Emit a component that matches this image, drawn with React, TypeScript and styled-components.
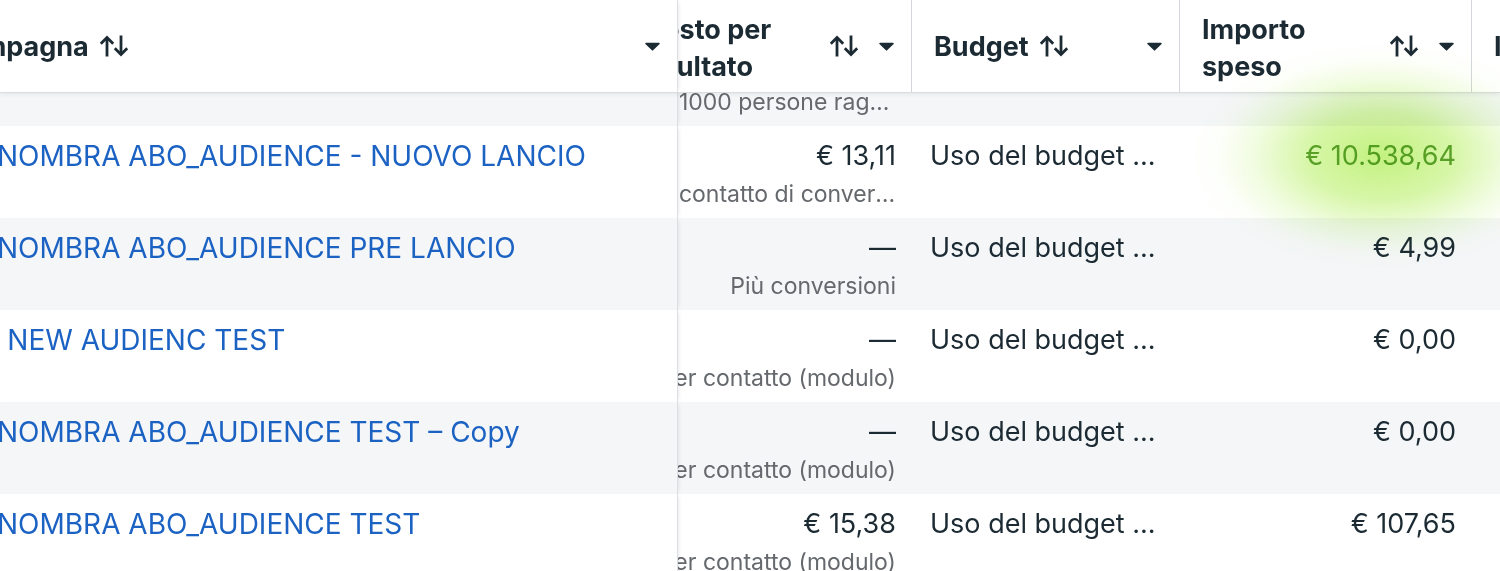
import React from 'react';
import styled, { createGlobalStyle } from 'styled-components';

const GlobalStyle = createGlobalStyle`
  html, body { margin: 0; padding: 0; background: #ffffff; }
  body { font-family: Inter, "Noto Sans", sans-serif; color: #1c2b33; -webkit-font-smoothing: antialiased; }
`;

const Viewport = styled.div`
  width: 1500px;
  height: 571px;
  overflow: hidden;
  position: relative;
  background: #ffffff;
`;

const HeaderRow = styled.div`
  display: flex;
  height: 92px;
  position: relative;
  z-index: 3;
  background: #ffffff;
  box-shadow: 0 1px 0 #d9dce0, 0 2px 5px rgba(0, 0, 0, 0.08);
`;

const StickyHead = styled.div`
  flex: none;
  width: 677px;
  display: flex;
  align-items: center;
  padding-right: 17px;
  box-sizing: border-box;
  background: #ffffff;
  position: relative;
  z-index: 2;
  overflow: hidden;
  box-shadow: 1px 0 0 #dcdfe3, 4px 0 4px -3px rgba(0, 0, 0, 0.14);
`;

const Track = styled.div`
  display: flex;
  flex: none;
  margin-left: -123px;
`;

const HeadCell = styled.div<{ $w: number; $pl?: number; $last?: boolean }>`
  flex: none;
  width: ${(p) => p.$w}px;
  box-sizing: border-box;
  display: flex;
  align-items: center;
  padding: 0 17px 0 ${(p) => p.$pl ?? 22}px;
  border-right: ${(p) => (p.$last ? 'none' : '1px solid #d3d7db')};
  overflow: hidden;
`;

const HeadTitle = styled.div<{ $shift?: number; $two?: boolean }>`
  font-weight: 700;
  font-size: 27px;
  line-height: 37px;
  color: #1c2b33;
  white-space: nowrap;
  margin-left: ${(p) => p.$shift ?? 0}px;
  margin-top: ${(p) => (p.$two ? 4 : 0)}px;
  display: flex;
  align-items: center;
  gap: 10px;
`;

const Spacer = styled.div`
  flex: 1;
`;

const IconGroup = styled.div`
  display: flex;
  align-items: center;
  gap: 20px;
  margin-left: 8px;
`;

const Body = styled.div`
  margin-top: -58px;
`;

const Row = styled.div<{ $alt?: boolean }>`
  display: flex;
  height: 92px;
  background: ${(p) => (p.$alt ? '#f4f6f8' : '#ffffff')};
`;

const NameCell = styled.div`
  flex: none;
  width: 677px;
  box-sizing: border-box;
  padding-top: 12px;
  background: inherit;
  position: relative;
  z-index: 2;
  overflow: hidden;
  box-shadow: 1px 0 0 #dcdfe3, 4px 0 4px -3px rgba(0, 0, 0, 0.14);
`;

const CampaignLink = styled.a<{ $shift: number }>`
  display: block;
  font-size: 28px;
  line-height: 36px;
  color: #1b62c3;
  white-space: nowrap;
  text-decoration: none;
  margin-left: ${(p) => p.$shift}px;
`;

const Cell = styled.div<{ $w: number; $pl?: number; $align?: 'left' | 'right' }>`
  flex: none;
  width: ${(p) => p.$w}px;
  box-sizing: border-box;
  padding: 12px 16px 0 ${(p) => p.$pl ?? 22}px;
  text-align: ${(p) => p.$align ?? 'right'};
  position: relative;
`;

const Main = styled.div<{ $green?: boolean }>`
  font-size: 27px;
  line-height: 36px;
  height: 36px;
  white-space: nowrap;
  color: ${(p) => (p.$green ? '#6aa63b' : '#1c2b33')};
`;

const Sub = styled.div`
  font-size: 23px;
  line-height: 40px;
  color: #65686c;
  white-space: nowrap;
  overflow: hidden;
  text-overflow: ellipsis;
`;

const Glow = styled.span`
  position: relative;
  display: inline-block;
  &::before {
    content: '';
    position: absolute;
    left: 50%;
    top: 50%;
    width: 370px;
    height: 220px;
    transform: translate(-50%, -50%);
    background: radial-gradient(
      ellipse at center,
      rgba(180, 238, 96, 0.8) 0%,
      rgba(190, 241, 114, 0.62) 28%,
      rgba(212, 247, 162, 0.34) 48%,
      rgba(236, 251, 212, 0.14) 62%,
      rgba(255, 255, 255, 0) 74%
    );
    mix-blend-mode: multiply;
    pointer-events: none;
    z-index: 4;
  }
`;

const SortIcon = () => (
  <svg width="30" height="22" viewBox="0 0 30 22" fill="none" stroke="#1c2b33" strokeWidth="2.8">
    <path d="M8 21.5V2.5" />
    <path d="M1.8 8.7L8 2.5l6.2 6.2" />
    <path d="M22 0.5v19" />
    <path d="M15.8 13.3L22 19.5l6.2-6.2" />
  </svg>
);

const Caret = () => (
  <svg width="15" height="9" viewBox="0 0 15 9">
    <path d="M1 0.8h13a0.8 0.8 0 0 1 0.6 1.3L8.1 8.3a0.8 0.8 0 0 1-1.2 0L0.4 2.1A0.8 0.8 0 0 1 1 0.8z" fill="#1c2b33" />
  </svg>
);

type RowData = {
  name: string;
  shift: number;
  cost: string;
  costSub: string;
  budget: string;
  spent: string;
  green?: boolean;
};

const rows: RowData[] = [
  { name: '', shift: 0, cost: '', costSub: 'Costo per 1000 persone raggiunte', budget: '', spent: '' },
  { name: 'NOMBRA ABO_AUDIENCE - NUOVO LANCIO', shift: -3, cost: '€ 13,11', costSub: 'Costo per contatto di conversione', budget: 'Uso del budget ...', spent: '€ 10.538,64', green: true },
  { name: 'NOMBRA ABO_AUDIENCE PRE LANCIO', shift: -3, cost: '—', costSub: 'Più conversioni', budget: 'Uso del budget ...', spent: '€ 4,99' },
  { name: 'O NEW AUDIENC TEST', shift: -22, cost: '—', costSub: 'Costo per contatto (modulo)', budget: 'Uso del budget ...', spent: '€ 0,00' },
  { name: 'NOMBRA ABO_AUDIENCE TEST – Copy', shift: -3, cost: '—', costSub: 'Costo per contatto (modulo)', budget: 'Uso del budget ...', spent: '€ 0,00' },
  { name: 'NOMBRA ABO_AUDIENCE TEST', shift: -3, cost: '€ 15,38', costSub: 'Costo per contatto (modulo)', budget: 'Uso del budget ...', spent: '€ 107,65' },
];

export default function App() {
  return (
    <>
      <GlobalStyle />
      <Viewport>
        <HeaderRow>
          <StickyHead>
            <HeadTitle $shift={-54}>
              Campagna <SortIcon />
            </HeadTitle>
            <Spacer />
            <Caret />
          </StickyHead>
          <Track>
            <HeadCell $w={358} $pl={89}>
              <HeadTitle $two>
                Costo per
                <br />
                risultato
              </HeadTitle>
              <Spacer />
              <IconGroup>
                <SortIcon />
                <Caret />
              </IconGroup>
            </HeadCell>
            <HeadCell $w={268}>
              <HeadTitle>
                Budget <SortIcon />
              </HeadTitle>
              <Spacer />
              <Caret />
            </HeadCell>
            <HeadCell $w={292}>
              <HeadTitle $two>
                Importo
                <br />
                speso
              </HeadTitle>
              <Spacer />
              <IconGroup>
                <SortIcon />
                <Caret />
              </IconGroup>
            </HeadCell>
            <HeadCell $w={300} $last>
              <HeadTitle>
                Impressioni <SortIcon />
              </HeadTitle>
            </HeadCell>
          </Track>
        </HeaderRow>
        <Body>
          {rows.map((r, i) => (
            <Row key={i} $alt={i % 2 === 0}>
              <NameCell>
                {r.name && <CampaignLink $shift={r.shift}>{r.name}</CampaignLink>}
              </NameCell>
              <Track>
                <Cell $w={358} $pl={12}>
                  <Main>{r.cost}</Main>
                  <Sub>{r.costSub}</Sub>
                </Cell>
                <Cell $w={268} $pl={18} $align="left">
                  <Main>{r.budget}</Main>
                </Cell>
                <Cell $w={292}>
                  <Main $green={r.green}>{r.green ? <Glow>{r.spent}</Glow> : r.spent}</Main>
                </Cell>
                <Cell $w={300}>
                  <Main>{r.name ? '—' : ''}</Main>
                </Cell>
              </Track>
            </Row>
          ))}
        </Body>
      </Viewport>
    </>
  );
}
